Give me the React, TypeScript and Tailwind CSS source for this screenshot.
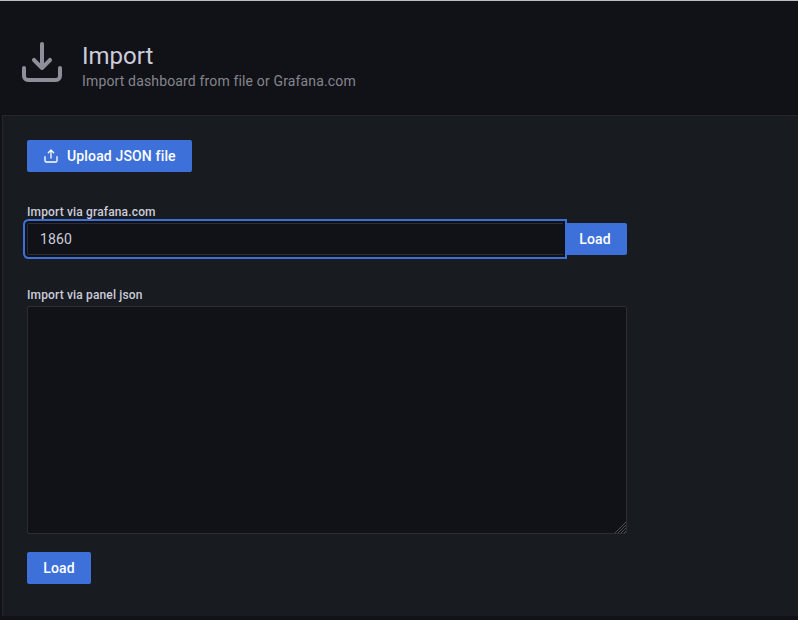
export default function App() {
  return (
    <div className="flex h-[620px] w-[798px] flex-col overflow-hidden border-t border-[#bcbec0] bg-[#111217] font-['Roboto',sans-serif] text-[14px] tracking-[0.15px] text-[#ccccdc]">
      <header className="flex h-[114px] shrink-0 items-start pl-[18px] pt-[37px]">
        <svg width="48" height="48" viewBox="0 0 24 24" fill="#8e8e9a">
          <path d="M21,14a1,1,0,0,0-1,1v4a1,1,0,0,1-1,1H5a1,1,0,0,1-1-1V15a1,1,0,0,0-2,0v4a3,3,0,0,0,3,3H19a3,3,0,0,0,3-3V15A1,1,0,0,0,21,14Zm-9.71,1.71a1,1,0,0,0,.33.21.94.94,0,0,0,.76,0,1,1,0,0,0,.33-.21l4-4a1,1,0,0,0-1.42-1.42L13,12.59V3a1,1,0,0,0-2,0v9.59l-2.29-2.3a1,1,0,1,0-1.42,1.42Z" />
        </svg>
        <div className="ml-4 pt-[4px]">
          <h1 className="text-[24px] leading-[28px] tracking-normal">Import</h1>
          <p className="leading-[22px] text-[#85858f]">Import dashboard from file or Grafana.com</p>
        </div>
      </header>
      <main className="ml-[2px] flex h-[501px] shrink-0 flex-col items-start border-l border-t border-[#25272c] bg-[#181b1f] pl-6 pt-6">
        <button className="flex h-8 w-[165px] items-center whitespace-nowrap rounded-[2px] bg-[#3d71d9] pl-4 font-medium text-white">
          <svg className="mr-2" width="16" height="16" viewBox="0 0 24 24" fill="currentColor">
            <path d="M8.71,7.71,11,5.41V15a1,1,0,0,0,2,0V5.41l2.29,2.3a1,1,0,0,0,1.42,0,1,1,0,0,0,0-1.42l-4-4a1,1,0,0,0-.33-.21,1,1,0,0,0-.76,0,1,1,0,0,0-.33.21l-4,4A1,1,0,1,0,8.71,7.71ZM21,12a1,1,0,0,0-1,1v6a1,1,0,0,1-1,1H5a1,1,0,0,1-1-1V13a1,1,0,0,0-2,0v6a3,3,0,0,0,3,3H19a3,3,0,0,0,3-3V13A1,1,0,0,0,21,12Z" />
          </svg>
          Upload JSON file
        </button>
        <label className="mt-[33px] h-[18px] text-[12px] font-medium leading-[15px]">Import via grafana.com</label>
        <div className="flex h-8 w-[600px]">
          <input className="relative z-10 h-8 min-w-0 flex-1 rounded-l-[2px] border border-r-0 border-[#2d2e34] bg-[#111217] px-3 text-[14px] shadow-[0_0_0_2px_#111217,0_0_0_4px_#3d71d9] outline-none" defaultValue="1860" />
          <button className="h-8 w-16 rounded-r-[2px] bg-[#3d71d9] font-medium text-white">Load</button>
        </div>
        <label className="mt-[33px] h-[18px] text-[12px] font-medium leading-[15px]">Import via panel json</label>
        <div className="relative h-[228px] w-[600px]">
          <textarea className="block h-full w-full resize-none rounded-[2px] border border-[#2d2e34] bg-[#111217] p-2 outline-none" />
          <svg className="pointer-events-none absolute bottom-[1px] right-[1px]" width="11" height="11" viewBox="0 0 11 11" stroke="#56575b" strokeWidth="0.9">
            <path d="M0 11 11 0M3 11 11 3M6 11 11 6M9 11 11 9" />
          </svg>
        </div>
        <button className="mt-[18px] h-8 w-16 rounded-[2px] bg-[#3d71d9] font-medium text-white">Load</button>
      </main>
    </div>
  );
}
